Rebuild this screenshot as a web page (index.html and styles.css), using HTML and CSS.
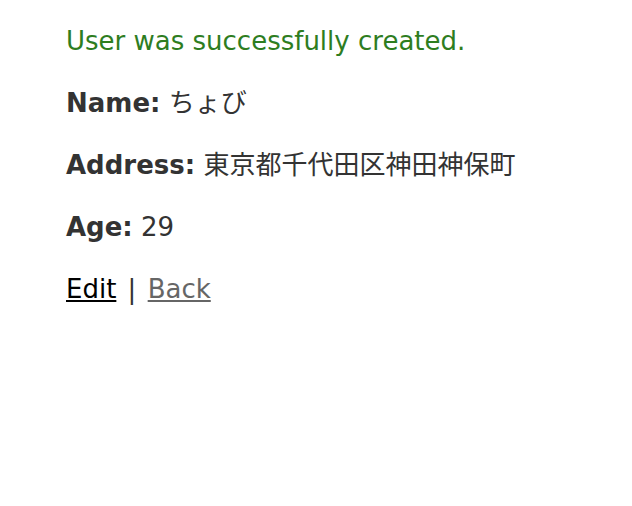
FILE: index.html
```html
<!DOCTYPE html>
<html>
<head>
<meta charset="utf-8">
<link rel="stylesheet" href="styles.css">
</head>
<body>
<div class="page">
<p class="notice">User was successfully created.</p>
<p><strong>Name:</strong> ちょび</p>
<p><strong>Address:</strong> 東京都千代田区神田神保町</p>
<p><strong>Age:</strong> 29</p>
<p class="actions"><a href="#" class="edit">Edit</a> | <a href="#" class="back">Back</a></p>
</div>
</body>
</html>
```
FILE: styles.css
```css
html, body { margin: 0; padding: 0; background: #fff; }
body {
  font-family: "DejaVu Sans", Verdana, "Noto Sans CJK JP", sans-serif;
  font-size: 26px;
  color: #333;
}
.page { padding: 22px 0 0 66px; }
p { margin: 0 0 24px; line-height: 38px; }
.notice { color: #2e7d1f; }
.actions { word-spacing: 3px; }
a { color: #000; word-spacing: 0; }
a.back { color: #666; }
```
